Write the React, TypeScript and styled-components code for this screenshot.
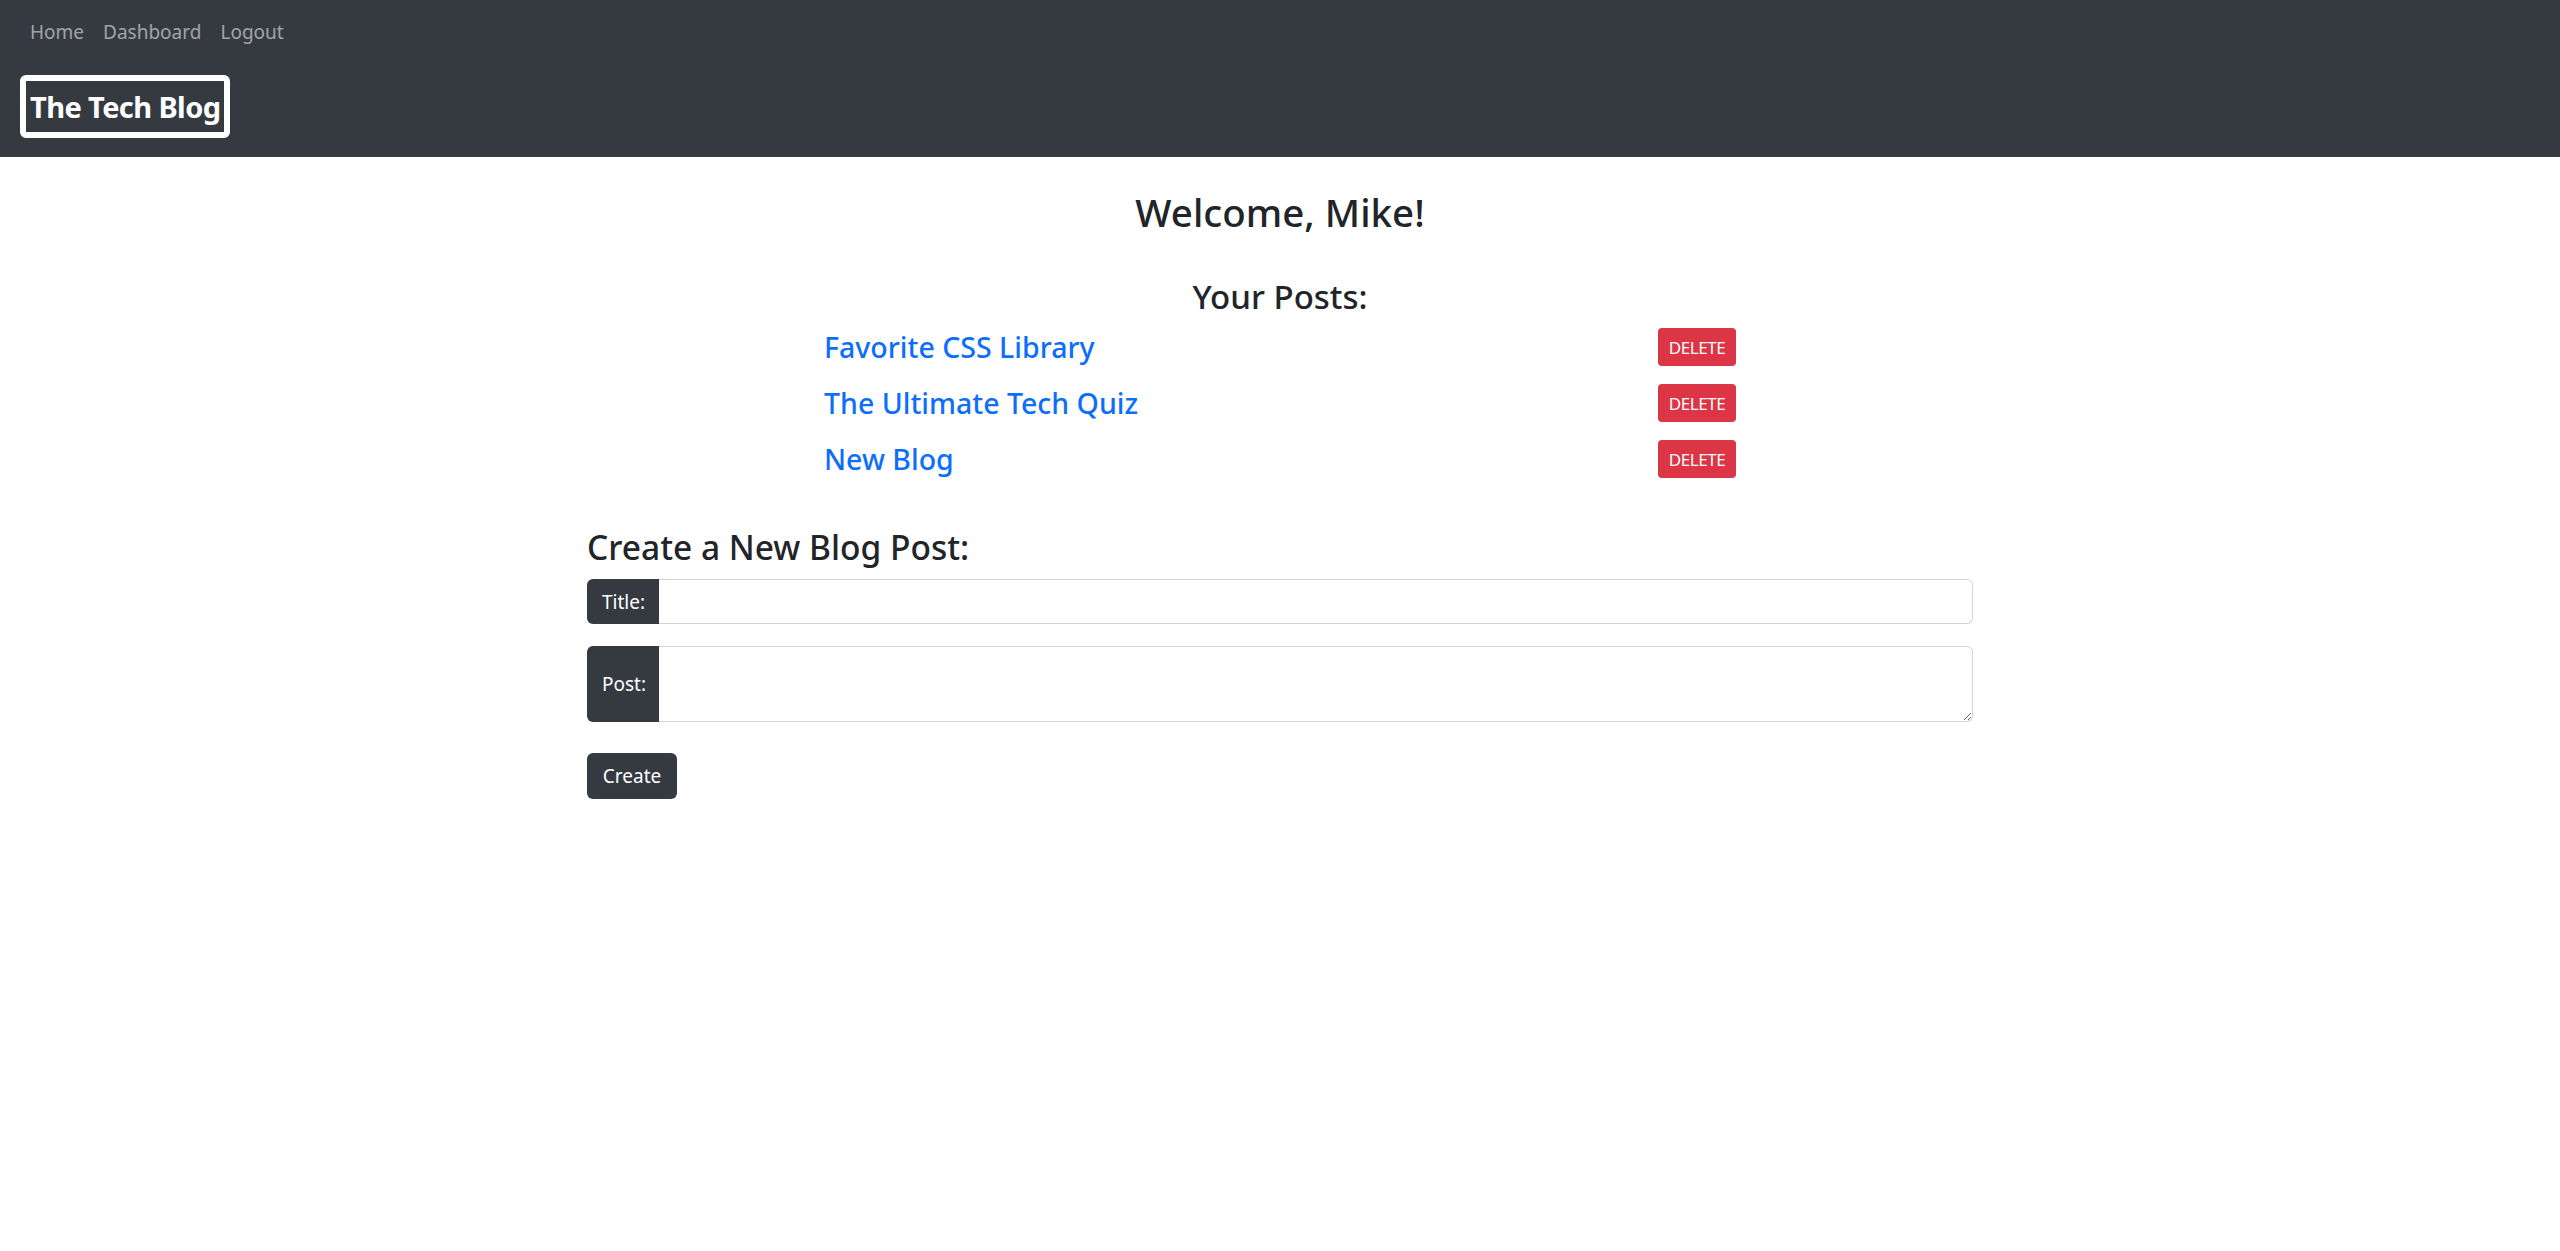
import React from "react";
import styled, { createGlobalStyle } from "styled-components";

const GlobalStyle = createGlobalStyle`
  html, body { margin: 0; padding: 0; background: #fff; }
  body {
    font-family: "Segoe UI", "Noto Sans", "Open Sans", sans-serif;
    color: #212529;
  }
  * { box-sizing: border-box; }
`;

const Header = styled.header`
  background: #343a40;
  height: 157px;
  padding: 17px 20px 0 20px;
  display: flex;
  flex-direction: column;
  gap: 28px;
`;

const Nav = styled.nav`
  display: flex;
  gap: 19px;
  padding-left: 10px;
`;

const NavLink = styled.a`
  font-size: 19px;
  line-height: 30px;
  color: rgba(255, 255, 255, 0.55);
  text-decoration: none;
`;

const Brand = styled.a`
  align-self: flex-start;
  border: 6px solid #fff;
  border-radius: 6px;
  padding: 0 4px;
  height: 63px;
  display: flex;
  align-items: center;
  font-size: 29px;
  font-weight: 700;
  color: #fff;
  text-decoration: none;
  letter-spacing: -0.6px;
`;

const Main = styled.main`
  display: flex;
  flex-direction: column;
  align-items: center;
  padding-top: 31px;
`;

const Welcome = styled.h2`
  margin: 0;
  font-size: 38.5px;
  line-height: 48px;
  font-weight: 500;
  text-align: center;
`;

const SectionTitle = styled.h3`
  margin: 40px 0 1px 0;
  font-size: 33px;
  line-height: 42px;
  font-weight: 500;
  text-align: center;
`;

const PostList = styled.ul`
  list-style: none;
  margin: 0;
  padding: 0;
  width: 912px;
`;

const PostRow = styled.li`
  height: 56px;
  display: flex;
  align-items: center;
  justify-content: space-between;
`;

const PostLink = styled.a`
  font-size: 28.5px;
  line-height: 1.2;
  font-weight: 500;
  color: #0d6efd;
  text-decoration: none;
`;

const DeleteButton = styled.button`
  width: 78px;
  height: 38px;
  border: none;
  border-radius: 4px;
  background: #dc3545;
  color: #fff;
  font-family: inherit;
  font-size: 17px;
  letter-spacing: -0.4px;
  text-transform: uppercase;
  padding: 0;
`;

const Form = styled.form`
  width: 1386px;
  margin-top: 39px;
  display: flex;
  flex-direction: column;
`;

const FormTitle = styled.h3`
  margin: 0 0 11px 0;
  font-size: 33.5px;
  line-height: 42px;
  font-weight: 500;
`;

const InputGroup = styled.div<{ $tall?: boolean }>`
  display: flex;
  height: ${(p) => (p.$tall ? "76px" : "45px")};
  margin-bottom: ${(p) => (p.$tall ? "31px" : "22px")};
`;

const GroupLabel = styled.label`
  width: 72px;
  flex: none;
  display: flex;
  align-items: center;
  padding-left: 15px;
  background: #343a40;
  color: #fff;
  font-size: 19px;
  border-radius: 6px 0 0 6px;
`;

const TextInput = styled.input`
  flex: 1;
  border: 1px solid #ced4da;
  border-left: none;
  border-radius: 0 6px 6px 0;
  font-family: inherit;
  font-size: 20px;
  padding: 0 15px;
  outline: none;
`;

const TextArea = styled.textarea`
  flex: 1;
  border: 1px solid #ced4da;
  border-left: none;
  border-radius: 0 6px 6px 0;
  font-family: inherit;
  font-size: 20px;
  padding: 8px 15px;
  outline: none;
  resize: vertical;
`;

const CreateButton = styled.button`
  align-self: flex-start;
  width: 90px;
  height: 46px;
  border: none;
  border-radius: 6px;
  background: #343a40;
  color: #fff;
  font-family: inherit;
  font-size: 19px;
  padding: 0;
`;

const posts = ["Favorite CSS Library", "The Ultimate Tech Quiz", "New Blog"];

export default function App() {
  return (
    <>
      <GlobalStyle />
      <Header>
        <Nav>
          <NavLink href="#">Home</NavLink>
          <NavLink href="#">Dashboard</NavLink>
          <NavLink href="#">Logout</NavLink>
        </Nav>
        <Brand href="#">The Tech Blog</Brand>
      </Header>
      <Main>
        <Welcome>Welcome, Mike!</Welcome>
        <SectionTitle>Your Posts:</SectionTitle>
        <PostList>
          {posts.map((p) => (
            <PostRow key={p}>
              <PostLink href="#">{p}</PostLink>
              <DeleteButton type="button">Delete</DeleteButton>
            </PostRow>
          ))}
        </PostList>
        <Form onSubmit={(e) => e.preventDefault()}>
          <FormTitle>Create a New Blog Post:</FormTitle>
          <InputGroup>
            <GroupLabel>Title:</GroupLabel>
            <TextInput type="text" />
          </InputGroup>
          <InputGroup $tall>
            <GroupLabel>Post:</GroupLabel>
            <TextArea />
          </InputGroup>
          <CreateButton type="submit">Create</CreateButton>
        </Form>
      </Main>
    </>
  );
}
